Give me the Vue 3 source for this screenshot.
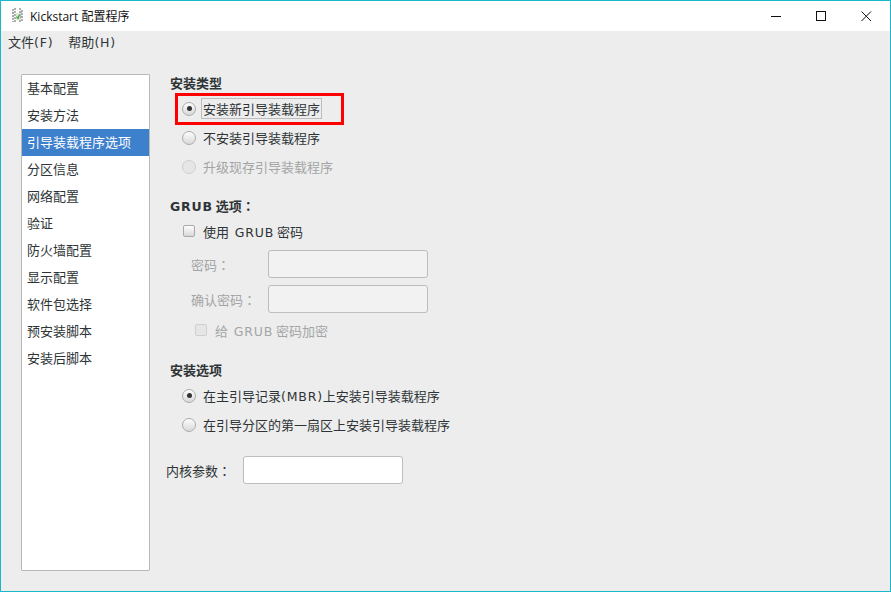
<script setup>
const items = ['基本配置','安装方法','引导装载程序选项','分区信息','网络配置','验证','防火墙配置','显示配置','软件包选择','预安装脚本','安装后脚本']
const selected = 2
</script>

<template>
  <div class="win">
    <header class="title">
      <svg class="appicon" width="16" height="18" viewBox="0 0 16 18">
        <path d="M4 2v13M6 1v15M11 1v15M13 3v11" fill="none" stroke="#5f625c" stroke-width="1" stroke-dasharray="2 1"/>
        <path d="M3 5l2 1M3 9l2 1M13 5l-2 1M13 9l-2 1" stroke="#9a9d97" stroke-width="1"/>
        <rect x="7" y="6" width="4" height="7" fill="#dbe9d2"/>
        <path d="M7.5 9.5l1.5 2 1.5-4" fill="none" stroke="#3f9a4a" stroke-width="1.2"/>
      </svg>
      <span class="title-text">Kickstart 配置程序</span>
      <div class="controls">
        <svg width="11" height="11" viewBox="0 0 11 11"><path d="M0 5.5h10" stroke="#111" stroke-width="1"/></svg>
        <svg width="11" height="11" viewBox="0 0 11 11"><rect x=".5" y=".5" width="9" height="9" fill="none" stroke="#111"/></svg>
        <svg width="11" height="11" viewBox="0 0 11 11"><path d="M.5.5l9.5 9.5M10 .5L.5 10" stroke="#111" stroke-width="1"/></svg>
      </div>
    </header>
    <nav class="menu"><span>文件<span class="lat">(F)</span></span><span>帮助<span class="lat">(H)</span></span></nav>
    <div class="body">
      <ul class="side">
        <li v-for="(t,i) in items" :key="t" :class="{sel:i===selected}">{{ t }}</li>
      </ul>
      <main class="main">
        <h3 class="h first">安装类型</h3>
        <div class="opts">
          <div class="hl"><label class="row"><i class="radio on"></i><span class="focus">安装新引导装载程序</span></label></div>
          <label class="row"><i class="radio"></i><span>不安装引导装载程序</span></label>
          <label class="row dis"><i class="radio"></i><span>升级现存引导装载程序</span></label>
        </div>
        <h3 class="h grub"><span class="lat">GRUB</span> 选项<span class="colon">：</span></h3>
        <label class="row chk"><i class="box"></i><span>使用&nbsp; <span class="lat">GRUB</span> 密码</span></label>
        <div class="field dis"><span class="lab">密码<span class="colon">：</span></span><i class="inp"></i></div>
        <div class="field dis"><span class="lab">确认密码<span class="colon">：</span></span><i class="inp"></i></div>
        <label class="row chk2 dis"><i class="box"></i><span>给&nbsp; <span class="lat">GRUB</span> 密码加密</span></label>
        <h3 class="h inst">安装选项</h3>
        <div class="opts">
          <label class="row"><i class="radio on"></i><span>在主引导记录<span class="lat">(MBR)</span>上安装引导装载程序</span></label>
          <label class="row"><i class="radio"></i><span>在引导分区的第一扇区上安装引导装载程序</span></label>
        </div>
        <div class="kernel"><span>内核参数<span class="colon">：</span></span><i class="inp white"></i></div>
      </main>
    </div>
  </div>
</template>

<style>
html, body { margin: 0; background: #ededed; }
</style>

<style scoped>
.win {
  width: 891px; height: 592px; box-sizing: border-box;
  border: 1px solid #18b7c9;
  background: #ededed; overflow: hidden;
  font-family: "Noto Sans CJK SC", "Noto Sans", sans-serif;
  font-size: 13px; color: #2e3436;
  display: flex; flex-direction: column;
}
.lat { font-family: "DejaVu Sans", sans-serif; letter-spacing: .8px; font-size: 12.5px; }
.colon { font-family: "Noto Sans CJK TC", sans-serif; }
.title {
  height: 30px; background: #fff; display: flex; align-items: center;
  padding-left: 8px; color: #111; flex: none;
}
.appicon { margin-right: 5px; }
.title-text { font-family: "Open Sans", "Noto Sans CJK SC", sans-serif; font-size: 12px; }
.controls { margin-left: auto; display: flex; gap: 34px; padding-right: 18px; align-items: center; }
.menu { height: 20px; display: flex; gap: 15px; align-items: center; padding-left: 7px; flex: none; }
.body { display: flex; padding: 23px 0 0 20px; flex: 1; min-height: 0; }
.side {
  list-style: none; margin: 0; padding: 0; width: 127px; height: 495px;
  background: #fff; border: 1px solid #b8b8b8; border-radius: 1px; flex: none;
}
.side li { height: 27px; line-height: 26px; padding-left: 5px; white-space: nowrap; }
.side li.sel { background: #3d80cc; color: #fff; }
.main { padding-left: 20px; display: flex; flex-direction: column; align-items: flex-start; }
.h { margin: 0; font-size: 13px; font-weight: 700; line-height: 18px; }
.first { margin-top: 0; }
.opts { display: flex; flex-direction: column; padding-left: 12px; margin-top: 2px; }
.row { display: flex; align-items: center; height: 29px; white-space: nowrap; }
.hl { position: relative; }
.hl::after {
  content: ""; position: absolute; left: -7px; top: -1px; width: 163px; height: 26px;
  border: 3px solid #ff0000; pointer-events: none;
}
.radio {
  width: 14px; height: 14px; border-radius: 50%; box-sizing: border-box;
  border: 1px solid #ababab; margin-right: 7px; flex: none; display: flex;
  align-items: center; justify-content: center;
  background: linear-gradient(#fdfdfd, #d8d8d8);
}
.radio.on::after { content: ""; width: 5px; height: 5px; border-radius: 50%; background: #333; }
.focus { border: 1px solid #bdbdbd; padding: 0 1px; margin-left: -2px; line-height: 19px; }
.dis { color: #a3a5a5; }
.dis .radio, .dis .box { border-color: #cfcfcf; background: #e6e6e6; }
.grub { margin-top: 16px; }
.box {
  width: 12px; height: 12px; box-sizing: border-box; border: 1px solid #a9a9a9; border-radius: 2px;
  background: linear-gradient(#fdfdfd, #d8d8d8); margin-right: 8px; flex: none;
}
.chk { margin-left: 13px; height: 28px; margin-top: 1px; }
.chk2 { margin-left: 25px; height: 26px; margin-top: 4px; }
.field { display: flex; align-items: center; height: 28px; margin-top: 5px; padding-left: 21px; }
.field + .field { margin-top: 7px; }
.lab { width: 77px; }
.inp {
  width: 160px; height: 28px; box-sizing: border-box; border: 1px solid #bdbdbd;
  border-radius: 3px; background: #f2f2f2; display: block;
}
.inp.white { background: #fff; margin-left: 12px; }
.inst { margin-top: 18px; }
.kernel { display: flex; align-items: center; margin: 17px 0 0 -4px; }
</style>
